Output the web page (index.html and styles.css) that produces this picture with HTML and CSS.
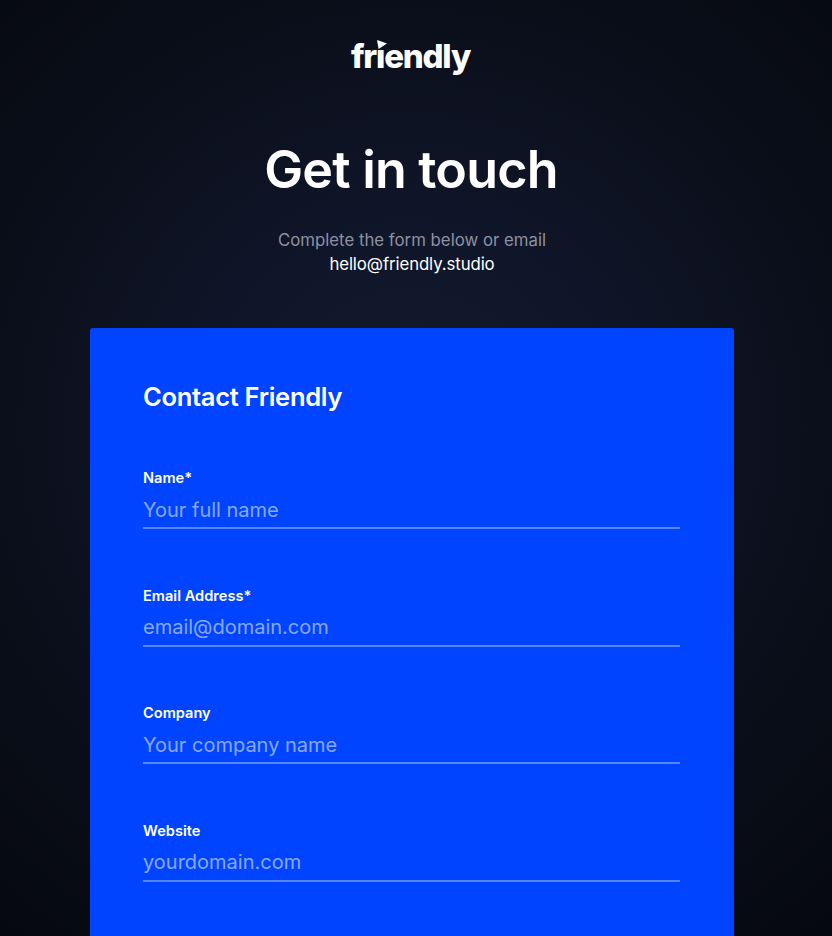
FILE: index.html
```html
<!DOCTYPE html>
<html lang="en">
<head>
    <meta charset="UTF-8">
    <meta name="viewport" content="width=device-width, initial-scale=1.0">
    <title>Get in touch</title>
    <link rel="stylesheet" href="styles.css">
</head>
<body>
    <header class="hero">
        <a href="#" class="logo">
            <span class="logo-text">fr<span class="logo-i">ı<svg class="logo-flag" viewBox="0 0 10 9" width="10" height="9"><polygon points="0,0 10,3.6 1.6,9" fill="#fff"/></svg></span>endly</span>
        </a>
        <h1>Get in touch</h1>
        <p class="intro">Complete the form below or email<br><a href="#">hello@friendly.studio</a></p>
    </header>
    <main class="card">
        <h2>Contact Friendly</h2>
        <form class="contact-form">
            <div class="field">
                <label for="name">Name*</label>
                <input type="text" id="name" placeholder="Your full name">
            </div>
            <div class="field">
                <label for="email">Email Address*</label>
                <input type="text" id="email" placeholder="email@domain.com">
            </div>
            <div class="field">
                <label for="company">Company</label>
                <input type="text" id="company" placeholder="Your company name">
            </div>
            <div class="field">
                <label for="website">Website</label>
                <input type="text" id="website" placeholder="yourdomain.com">
            </div>
        </form>
    </main>
</body>
</html>
```

FILE: styles.css
```css
html, body {
    height: 936px;
    overflow: hidden;
}
body {
    margin: 0;
    padding-right: 8px;
    font-family: Inter, "Liberation Sans", sans-serif;
    color: white;
    background: radial-gradient(circle 660px at 412px 430px, #151b2d 0%, #10162a 30%, #0b0f1b 62%, #05080e 100%);
    background-color: #05080e;
}
.hero {
    display: flex;
    flex-direction: column;
    align-items: center;
    padding-top: 32px;
}
.logo {
    color: white;
    text-decoration: none;
    height: 50px;
    margin-right: 3px;
}
.logo-text {
    font-size: 33px;
    line-height: 48px;
    font-weight: 800;
    letter-spacing: -1.2px;
}
.logo-i {
    position: relative;
}
.logo-flag {
    position: absolute;
    top: 4px;
    left: 1px;
}
h1 {
    margin: 58px 2px 0 0;
    font-size: 52px;
    line-height: 60px;
    font-weight: 600;
    letter-spacing: -0.8px;
}
.intro {
    margin: 28px 0 0;
    font-size: 16.8px;
    line-height: 24px;
    color: #8d91a1;
    text-align: center;
}
.intro a {
    color: white;
    text-decoration: none;
    letter-spacing: -0.1px;
}
.card {
    width: 644px;
    margin: 52px auto 0;
    padding: 54px 54px 80px 53px;
    box-sizing: border-box;
    background: #0044ff;
    border-radius: 3px;
}
h2 {
    margin: 0;
    font-size: 25.5px;
    line-height: 30px;
    font-weight: 600;
    letter-spacing: -0.3px;
}
.contact-form {
    display: flex;
    flex-direction: column;
    gap: 57.6px;
    margin-top: 57px;
}
.field {
    display: flex;
    flex-direction: column;
}
.field label {
    font-size: 14.6px;
    line-height: 18px;
    font-weight: 600;
}
.field input {
    height: 35px;
    padding: 5px 0 0;
    border: none;
    border-bottom: 2px solid rgba(255, 255, 255, 0.35);
    outline: none;
    background: transparent;
    font-family: inherit;
    font-size: 20px;
    color: white;
}
.field input::placeholder {
    color: rgba(255, 255, 255, 0.55);
    opacity: 1;
}
```
